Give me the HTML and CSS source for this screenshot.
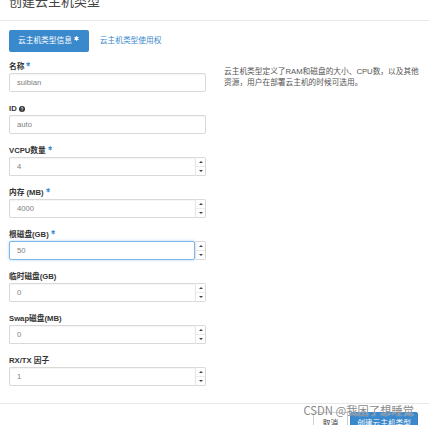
FILE: index.html
```html
<!DOCTYPE html>
<html lang="zh-CN">
<head>
<meta charset="utf-8">
<title>创建云主机类型</title>
<link rel="stylesheet" href="styles.css">
</head>
<body>
<div class="modal">
  <div class="modal-header">
    <h3 class="title">创建云主机类型</h3>
    <span class="close">×</span>
  </div>
  <div class="modal-body">
    <ul class="tabs">
      <li class="tab active">云主机类型信息<svg class="req" viewBox="0 0 10 10" width="5" height="5"><path d="M5 0.5V9.5M1.1 2.75L8.9 7.25M1.1 7.25L8.9 2.75"/></svg></li>
      <li class="tab">云主机类型使用权</li>
    </ul>
    <div class="row">
      <div class="form">
        <div class="group">
          <label class="label">名称<svg class="req" viewBox="0 0 10 10" width="4.5" height="4.5"><path d="M5 0.5V9.5M1.1 2.75L8.9 7.25M1.1 7.25L8.9 2.75"/></svg></label>
          <input class="field" type="text" value="suibian">
        </div>
        <div class="group">
          <label class="label">ID<svg class="help" viewBox="0 0 10 10" width="6" height="6"><circle cx="5" cy="5" r="5" fill="#333"/><path d="M3.4 3.9 C3.4 2.2 6.6 2.2 6.6 3.9 C6.6 5 5 5 5 6.2" stroke="#fff" stroke-width="1.4" fill="none"/><circle cx="5" cy="7.9" r="0.8" fill="#fff"/></svg></label>
          <input class="field" type="text" value="auto">
        </div>
        <div class="group">
          <label class="label">VCPU数量<svg class="req" viewBox="0 0 10 10" width="4.5" height="4.5"><path d="M5 0.5V9.5M1.1 2.75L8.9 7.25M1.1 7.25L8.9 2.75"/></svg></label>
          <div class="num"><input class="field num-input" type="text" value="4"><span class="spin"><span class="up"></span><span class="down"></span></span></div>
        </div>
        <div class="group">
          <label class="label">内存 (MB)<svg class="req" viewBox="0 0 10 10" width="4.5" height="4.5"><path d="M5 0.5V9.5M1.1 2.75L8.9 7.25M1.1 7.25L8.9 2.75"/></svg></label>
          <div class="num"><input class="field num-input" type="text" value="4000"><span class="spin"><span class="up"></span><span class="down"></span></span></div>
        </div>
        <div class="group">
          <label class="label">根磁盘(GB)<svg class="req" viewBox="0 0 10 10" width="4.5" height="4.5"><path d="M5 0.5V9.5M1.1 2.75L8.9 7.25M1.1 7.25L8.9 2.75"/></svg></label>
          <div class="num"><input class="field num-input focus" type="text" value="50"><span class="spin"><span class="up"></span><span class="down"></span></span></div>
        </div>
        <div class="group">
          <label class="label">临时磁盘(GB)</label>
          <div class="num"><input class="field num-input" type="text" value="0"><span class="spin"><span class="up"></span><span class="down"></span></span></div>
        </div>
        <div class="group">
          <label class="label">Swap磁盘(MB)</label>
          <div class="num"><input class="field num-input" type="text" value="0"><span class="spin"><span class="up"></span><span class="down"></span></span></div>
        </div>
        <div class="group">
          <label class="label">RX/TX 因子</label>
          <div class="num"><input class="field num-input" type="text" value="1"><span class="spin"><span class="up"></span><span class="down"></span></span></div>
        </div>
      </div>
      <div class="help-col">
        <p class="desc">云主机类型定义了RAM和磁盘的大小、CPU数，以及其他资源，用户在部署云主机的时候可选用。</p>
      </div>
    </div>
  </div>
  <div class="modal-footer">
    <button class="btn">取消</button>
    <button class="btn primary">创建云主机类型</button>
  </div>
  <div class="watermark">CSDN @我困了想睡觉</div>
</div>
</body>
</html>
```

FILE: styles.css
```css
html, body {
  margin: 0;
  padding: 0;
  background: #fff;
}
body {
  font-family: "Liberation Sans", "Noto Sans CJK SC", sans-serif;
  color: #333;
  height: 425px;
  overflow: hidden;
}
.modal {
  position: relative;
  width: 429px;
  height: 425px;
  overflow: hidden;
}
.modal-header {
  height: 20px;
  border-bottom: 1px solid #e8e8e8;
  padding: 0 9px;
  display: flex;
  justify-content: space-between;
  align-items: flex-start;
  overflow: hidden;
}
.title {
  margin: -5px 0 0 0;
  font-size: 13px;
  line-height: 13px;
  font-weight: normal;
  color: #444;
}
.close {
  margin: -9px 2px 0 0;
  font-size: 11px;
  line-height: 11px;
  color: #bbb;
}
.modal-body {
  padding: 9px 9px 7px 9px;
}
.tabs {
  list-style: none;
  margin: 0;
  padding: 0;
  display: flex;
  height: 22px;
}
.tab {
  display: flex;
  align-items: center;
  font-size: 7.7px;
  line-height: 22px;
  padding: 0 11px;
  color: #3a89cc;
}
.tab.active {
  background: #3a89cc;
  color: #fff;
  border-radius: 2px;
  padding: 0 10px 0 9px;
}
.req {
  flex: none;
  margin-left: 2px;
  stroke: #3a89cc;
  stroke-width: 2.4;
  fill: none;
}
.tab .req {
  stroke: #fff;
  align-self: flex-start;
  margin-top: 6px;
}
.row {
  display: flex;
  gap: 18px;
  margin-top: 9px;
}
.form {
  width: 197px;
  flex: none;
}
.group {
  margin-bottom: 11px;
}
.group:last-child {
  margin-bottom: 10px;
}
.label {
  display: flex;
  align-items: center;
  height: 11px;
  line-height: 11px;
  margin-bottom: 1px;
  font-size: 7.7px;
  font-weight: bold;
  color: #333;
}
.label .req {
  align-self: flex-start;
  margin-top: 1px;
}
.help {
  margin-left: 2px;
}
.field {
  display: block;
  box-sizing: border-box;
  width: 100%;
  height: 19px;
  margin: 0;
  padding: 0 7px;
  border: 1px solid #d9d9d9;
  border-radius: 2px;
  box-shadow: inset 0 1px 1px rgba(0, 0, 0, 0.04);
  font-family: "Liberation Sans", "Noto Sans CJK SC", sans-serif;
  font-size: 7.7px;
  color: #808080;
  background: #fff;
  outline: none;
}
.num {
  display: flex;
  height: 19px;
}
.num-input {
  flex: 1;
  width: auto;
  min-width: 0;
  border-right: 0;
  border-radius: 2px 0 0 2px;
}
.num-input.focus {
  border: 1px solid #7fb6e6;
  border-radius: 2px;
  box-shadow: 0 0 3px rgba(102, 175, 233, 0.55);
}
.spin {
  box-sizing: border-box;
  width: 11px;
  flex: none;
  display: flex;
  flex-direction: column;
  border: 1px solid #d9d9d9;
  border-left-color: #e6e6e6;
  border-radius: 0 2px 2px 0;
}
.spin .up,
.spin .down {
  flex: 1;
  display: flex;
  align-items: center;
  justify-content: center;
}
.spin .up {
  border-bottom: 1px solid #ececec;
}
.spin .up::before {
  content: "";
  border-left: 2px solid transparent;
  border-right: 2px solid transparent;
  border-bottom: 2.5px solid #444;
}
.spin .down::before {
  content: "";
  border-left: 2px solid transparent;
  border-right: 2px solid transparent;
  border-top: 2.5px solid #444;
}
.help-col {
  width: 200px;
  flex: none;
  padding-top: 6px;
}
.desc {
  margin: 0;
  font-size: 7.7px;
  line-height: 10.5px;
  color: #555;
}
.modal-footer {
  border-top: 1px solid #e8e8e8;
  padding: 8px 11px 0 0;
  display: flex;
  justify-content: flex-end;
  gap: 2px;
}
.btn {
  height: 20px;
  margin: 0;
  padding: 0 9px;
  border: 1px solid #cfcfcf;
  border-radius: 2px;
  background: #fff;
  font-family: "Liberation Sans", "Noto Sans CJK SC", sans-serif;
  font-size: 7.7px;
  color: #333;
}
.btn.primary {
  padding: 0 6px;
  background: #3a89cc;
  border-color: #3a7fc0;
  color: #fff;
}
.watermark {
  position: absolute;
  right: 15px;
  top: 403px;
  font-family: "Noto Sans CJK SC", sans-serif;
  font-size: 11.3px;
  line-height: 15px;
  color: rgba(120, 120, 120, 0.9);
  text-shadow: 0 0 1px #fff;
  white-space: nowrap;
}
```
